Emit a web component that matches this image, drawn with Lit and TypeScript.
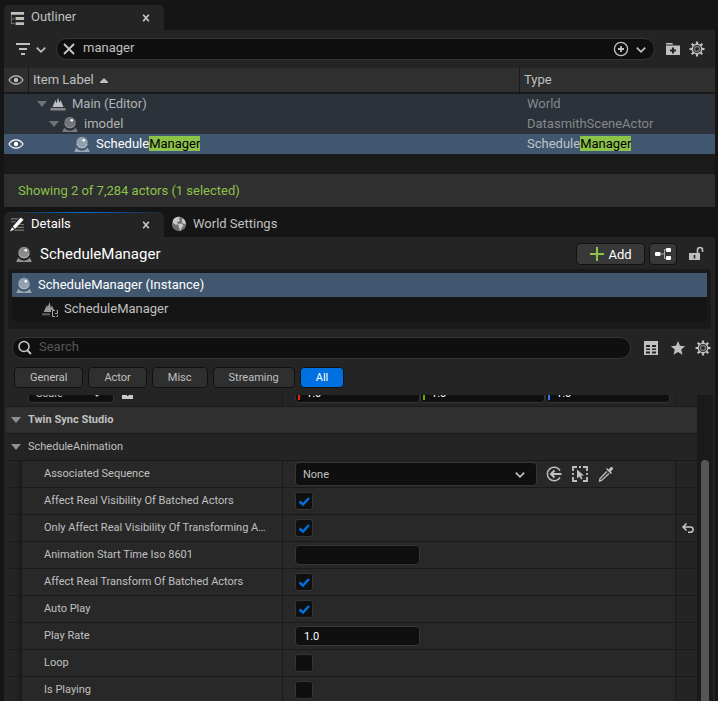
import { LitElement, html, css, svg, nothing } from "lit";
import { customElement, property } from "lit/decorators.js";
import { classMap } from "lit/directives/class-map.js";
import { styleMap } from "lit/directives/style-map.js";

const GEAR_TEETH = [0, 45, 90, 135, 180, 225, 270, 315];

const ICONS = {
  outliner: svg`<path d="M2 2h14v3H2zM7 7.500h9v3H7zM7 13h9v3H7z" fill="#c0c0c0"/><path d="M2.500 5v10M2.500 9.500H6M2.500 14.500H6" stroke="#777" fill="none"/>`,
  close: svg`<path d="M5.500 5l6 7M11.500 5l-6 7" stroke="#c8c8c8" stroke-width="1.800" fill="none"/>`,
  filter: svg`<path d="M1 2h14v2H1zM4 7h8v2H4zM6 12h4v2H6z" fill="#c0c0c0"/>`,
  chevron: svg`<path d="M4 7l4.500 4.500L13 7" stroke="#c0c0c0" stroke-width="1.800" fill="none"/>`,
  clear: svg`<path d="M3 3l10 10M13 3L3 13" stroke="#c8c8c8" stroke-width="1.800" fill="none"/>`,
  plusCircle: svg`<circle cx="8" cy="8" r="6.600" stroke="#c0c0c0" stroke-width="1.300" fill="none"/><path d="M8 5v6M5 8h6" stroke="#c0c0c0" stroke-width="1.800"/>`,
  folderPlus: svg`<path d="M1 2h6l1.500 1.500H1z" fill="#c0c0c0"/><path fill-rule="evenodd" d="M1 4.500h14V14H1zM7 6.500v2H5v2h2v2h2v-2h2v-2H9v-2z" fill="#c0c0c0"/>`,
  gear: svg`<g stroke="#c0c0c0" fill="none">${GEAR_TEETH.map(
    (a) => svg`<path d="M8 0.500v3" stroke-width="2.200" transform="rotate(${a} 8 8)"/>`
  )}<circle cx="8" cy="8" r="4.700" stroke-width="1.400"/><circle cx="8" cy="8" r="2.500" stroke="#777" stroke-width="1.400"/></g>`,
  eye: svg`<path d="M1 8c3.500-5.500 10.500-5.500 14 0c-3.500 5.500-10.500 5.500-14 0z" stroke="currentColor" stroke-width="1.200" fill="none"/><circle cx="8" cy="8" r="2.200" fill="currentColor"/>`,
  world: svg`<path d="M2.500 11L5.500 4l1 3.500L8 1.500l1.500 5.500 1-3 3 7z" fill="#c0c0c0"/><path d="M0.500 14.500V12h15v2.500z" fill="#868a8e"/>`,
  actor: svg`<path d="M2.500 11.500L.500 15v1h15v-1l-2-3.500-1 1.500a7 7 0 0 1-9 0z" fill="currentColor" opacity=".75"/><circle cx="8" cy="6.500" r="5.700" fill="currentColor" opacity=".7"/><path d="M2.800 8a5.400 5.400 0 0 0 10.400 0" stroke="currentColor" fill="none"/><circle cx="9.800" cy="4.300" r="1.300" fill="#fff"/>`,
  details: svg`<path d="M2 2h8M2 5h5M11 8h5M8 11h8M6 14h10" stroke="#777" stroke-width="1.200"/><path d="M12.500 0.500l3 2.500-9 9.500-2.500-2.500zM3.200 10.800l2.500 2.500L1 15.500z" fill="#fff"/>`,
  globe: svg`<circle cx="8" cy="7" r="7.200" fill="#6e6e6e"/><path d="M2 3c2-3 5-3.500 7-3l-1 2 1 2-3 1 1 2-2 1-3-2zM7 7l4-.5 1.500 2.500-2 2-1 3-1.500-3zM11 1l3 2.500.8 4-2-.5-2-2z" fill="#c8c8c8"/>`,
  component: svg`<path d="M2 10L5 4l.8 2L7.500 1l1.500 6 1-2.500L12 9H9v2H2z" fill="#999"/><path d="M0 14.500V12h8v2.500z" fill="#555"/><path d="M13 9.500h-2.500v6H13M15.500 12.500v-3h-1M15.500 14v1.500h-1M15.500 12.500h-2.500" stroke="#aaa" fill="none"/>`,
  plus: svg`<path d="M8 1v14M1 8h14" stroke="#8bc24a" stroke-width="2"/>`,
  graph: svg`<path d="M5 8h4M13 3.500H9.500v9H13" stroke="#aaa" fill="none"/><rect x="0" y="6" width="5.500" height="4" rx="1" fill="#fff"/><rect x="11" y="2" width="5" height="4" rx="1" fill="#fff"/><rect x="11" y="10" width="5" height="4" rx="1" fill="#fff"/>`,
  lock: svg`<path d="M9.500 8V4a2.500 2.500 0 0 1 5 0V6" stroke="#c0c0c0" stroke-width="1.600" fill="none"/><path fill-rule="evenodd" d="M1 7h11V14H1zM5.700 9v3.500h1.600V9z" fill="#c0c0c0"/>`,
  search: svg`<circle cx="7" cy="6.500" r="5" stroke="#c8c8c8" stroke-width="1.500" fill="none"/><path d="M10.500 10.500L14 14" stroke="#c8c8c8" stroke-width="1.800"/>`,
  grid: svg`<path fill-rule="evenodd" d="M1 1h14v14H1zM3 5v2h4V5zM9 5v2h4V5zM3 8.500v1.500h4V8.500zM9 8.500v1.500h4V8.500zM3 11.500v2h4v-2zM9 11.500v2h4v-2z" fill="#c0c0c0"/>`,
  star: svg`<path d="M9 1l2 4.800 5.200.4-4 3.400 1.300 5.200L9 12l-4.500 2.800 1.300-5.200-4-3.400L7 5.800z" fill="#c0c0c0"/>`,
  down: svg`<path d="M0 5h10L5 11z" fill="currentColor"/>`,
  sort: svg`<path d="M0 11h8v-1L4 6 0 10z" fill="#c0c0c0"/>`,
  useAsset: svg`<path d="M14 4.500A6.800 6.800 0 1 0 14 11.500" stroke="#c0c0c0" stroke-width="1.500" fill="none"/><path d="M15.500 8H5M8.500 4.500L5 8l3.500 3.500" stroke="#c0c0c0" stroke-width="2" fill="none"/>`,
  browse: svg`<path d="M1 5V1h4M11 1h4v4M15 11v4h-4M5 15H1v-4M7 1h2M1 7v2M15 7v2" stroke="#c0c0c0" stroke-width="1.800" fill="none"/><path d="M5 3.500l7 6-3 .3 1.500 3-1.500.8-1.600-3L5 12.500z" fill="#c0c0c0"/>`,
  picker: svg`<path d="M9 5.500l-7 7L1.500 15l2-.5 7.500-7" stroke="#c0c0c0" stroke-width="1.300" fill="none"/><path d="M8 3l1-1 1.500 1.500L13 1q2.500-.5 2 2.200L12.700 5.500 14 7l-1 1z" fill="#c0c0c0"/>`,
  reset: svg`<path d="M7.500 3.500L4 7l3.500 3.500M4 7h7.500a2.600 2.600 0 0 1 0 5.200H9" stroke="#c8c8c8" stroke-width="1.500" fill="none"/>`,
  check: svg`<path d="M3.500 8.500L7 11.500 13 5" stroke="#0070e0" stroke-width="2.400" fill="none"/>`,
  lockSmall: svg`<path fill-rule="evenodd" d="M2 3h11v13H2zM7 7v6h1.500V7z" fill="#c8c8c8"/>`,
};

type IconName = keyof typeof ICONS;

@customElement("ui-icon")
class UiIcon extends LitElement {
  @property() name: IconName = "close";

  static styles = css`
    :host {
      display: inline-flex;
      flex: none;
      width: 16px;
      height: 16px;
    }
    .glyph {
      display: block;
      width: 100%;
      height: 100%;
      overflow: visible;
    }
  `;

  render() {
    const wide = this.name === "outliner" || this.name === "details" || this.name === "chevron" || this.name === "close";
    const box = this.name === "down" ? "0 0 10 16" : this.name === "sort" ? "0 0 8 16" : wide ? "0 0 17 17" : "0 0 16 16";
    return html`<svg class="glyph" viewBox=${box} aria-hidden="true">${ICONS[this.name]}</svg>`;
  }
}

interface Item {
  label: string;
  match?: string;
  type: string;
  icon: IconName;
  depth: number;
  selected?: boolean;
}

const ITEMS: Item[] = [
  { label: "Main (Editor)", type: "World", icon: "world", depth: 0 },
  { label: "imodel", type: "DatasmithSceneActor", icon: "actor", depth: 1 },
  { label: "Schedule", match: "Manager", type: "Schedule", icon: "actor", depth: 2, selected: true },
];

interface Prop {
  name: string;
  kind: "asset" | "bool" | "text";
  value?: string;
  on?: boolean;
  changed?: boolean;
}

const PROPS: Prop[] = [
  { name: "Associated Sequence", kind: "asset", value: "None" },
  { name: "Affect Real Visibility Of Batched Actors", kind: "bool", on: true },
  { name: "Only Affect Real Visibility Of Transforming Actors", kind: "bool", on: true, changed: true },
  { name: "Animation Start Time Iso 8601", kind: "text", value: "" },
  { name: "Affect Real Transform Of Batched Actors", kind: "bool", on: true },
  { name: "Auto Play", kind: "bool", on: true },
  { name: "Play Rate", kind: "text", value: "1.0" },
  { name: "Loop", kind: "bool" },
  { name: "Is Playing", kind: "bool" },
];

const FILTERS = ["General", "Actor", "Misc", "Streaming", "All"];

const base = css`
  * {
    box-sizing: border-box;
  }
  button,
  input,
  select {
    font: inherit;
    color: inherit;
    margin: 0;
    padding: 0;
    border: 0;
    background: none;
    min-width: 0;
  }
  input,
  select {
    outline: none;
  }
  .tabs {
    display: flex;
    height: 25px;
  }
  .tab {
    display: flex;
    align-items: center;
    gap: 6px;
    width: 160px;
    padding: 0 10px 0 5px;
    color: #c0c0c0;
  }
  .tab.open {
    background: #242424;
    border-radius: 5px 5px 0 0;
  }
  .tab-name {
    flex: 1;
    text-align: left;
    padding-bottom: 2px;
  }
  .icon-btn {
    display: inline-flex;
  }
  .search {
    display: flex;
    align-items: center;
    flex: 1;
    min-width: 0;
    height: 22px;
    background: #0f0f0f;
    border: 1px solid #353535;
    border-radius: 11px;
  }
  .search-input {
    flex: 1;
    height: 20px;
    padding-bottom: 3px;
  }
`;

@customElement("scene-outliner")
class SceneOutliner extends LitElement {
  static styles = [
    base,
    css`
      :host {
        display: block;
      }
      .panel {
        background: #242424;
      }
      .toolbar {
        display: flex;
        align-items: center;
        height: 38px;
        padding: 0 10px 0 11px;
      }
      .filter {
        display: flex;
        gap: 2px;
        margin-right: 7px;
      }
      .search {
        padding: 0 5px 0 4px;
      }
      .search-input {
        margin-left: 6px;
      }
      .add-filter {
        gap: 4px;
      }
      .tools {
        display: flex;
        gap: 8px;
        margin-left: 10px;
      }
      .items {
        width: 100%;
        table-layout: fixed;
        border-collapse: separate;
        border-spacing: 0;
        line-height: 20px;
      }
      .items th {
        height: 26px;
        padding: 0 4px;
        font-weight: 400;
        text-align: left;
        background: #2f2f2f;
        border-bottom: 2px solid #1a1a1a;
      }
      .items .col-eye {
        width: 25px;
        border-right: 1px solid #1a1a1a;
      }
      .items .col-type {
        width: 196px;
        border-left: 1px solid #1a1a1a;
      }
      .head,
      .label {
        display: flex;
        align-items: center;
        height: 20px;
      }
      .head {
        gap: 6px;
      }
      .sort {
        width: 8px;
      }
      .items td {
        height: 20px;
        padding: 0;
      }
      .row {
        background: #2c323a;
        color: #b0b2b4;
      }
      .row .type {
        padding-left: 8px;
        color: #85888c;
      }
      .row.selected {
        background: #40576f;
        color: #fff;
      }
      .row.selected .type {
        color: #c0c4c8;
      }
      .eye {
        display: block;
        margin-left: 4px;
      }
      .arrow {
        width: 10px;
        margin-right: 3px;
        color: #6f7276;
      }
      .arrow.leaf {
        visibility: hidden;
      }
      .kind {
        margin-right: 6px;
        color: #909294;
      }
      .selected .kind {
        color: #b8c0c8;
      }
      .hit {
        background: #8bc24a;
        color: #000;
        line-height: 15px;
        display: inline-block;
      }
      .rest {
        height: 20px;
        background: #1a1a1a;
      }
      .status {
        height: 33px;
        line-height: 33px;
        padding: 0 14px;
        background: #2f2f2f;
        color: #8bc24a;
      }
    `,
  ];

  render() {
    return html`
      <div class="tabs">
        <div class="tab open">
          <ui-icon name="outliner"></ui-icon><span class="tab-name">Outliner</span>
          <button class="icon-btn" aria-label="Close Outliner"><ui-icon name="close"></ui-icon></button>
        </div>
      </div>
      <div class="panel">
        <div class="toolbar">
          <button class="filter" aria-label="Filter"><ui-icon name="filter"></ui-icon><ui-icon name="chevron"></ui-icon></button>
          <div class="search">
            <button class="icon-btn" aria-label="Clear search"><ui-icon name="clear"></ui-icon></button>
            <input class="search-input" aria-label="Search items" value="manager" />
            <button class="icon-btn add-filter" aria-label="Save search">
              <ui-icon name="plusCircle"></ui-icon><ui-icon name="chevron"></ui-icon>
            </button>
          </div>
          <div class="tools">
            <button class="icon-btn" aria-label="New folder"><ui-icon name="folderPlus"></ui-icon></button>
            <button class="icon-btn" aria-label="Outliner settings"><ui-icon name="gear"></ui-icon></button>
          </div>
        </div>
        <table class="items">
          <thead>
            <tr>
              <th class="col-eye" aria-label="Visibility"><div class="head"><ui-icon name="eye"></ui-icon></div></th>
              <th><div class="head">Item Label <ui-icon class="sort" name="sort"></ui-icon></div></th>
              <th class="col-type"><div class="head">Type</div></th>
            </tr>
          </thead>
          <tbody>
            ${ITEMS.map((item) => {
              const hit = item.match ? html`<span class="hit">${item.match}</span>` : nothing;
              return html`<tr class=${classMap({ row: true, selected: !!item.selected })}>
                <td>${item.selected ? html`<ui-icon class="eye" name="eye"></ui-icon>` : nothing}</td>
                <td>
                  <div class="label" style=${styleMap({ paddingLeft: `${8 + item.depth * 12}px` })}>
                    <ui-icon class=${classMap({ arrow: true, leaf: !!item.selected })} name="down"></ui-icon>
                    <ui-icon class="kind" name=${item.icon}></ui-icon><span>${item.label}${hit}</span>
                  </div>
                </td>
                <td class="type">${item.type}${hit}</td>
              </tr>`;
            })}
          </tbody>
        </table>
        <div class="rest"></div>
        <div class="status">Showing 2 of 7,284 actors (1 selected)</div>
      </div>
    `;
  }
}

@customElement("details-panel")
class DetailsPanel extends LitElement {
  static styles = [
    base,
    css`
      :host {
        display: flex;
        flex-direction: column;
        min-height: 0;
      }
      .tab.active {
        color: #fff;
        background: linear-gradient(90deg, #242424, #0070e0 50%, #242424) top / 100% 1px no-repeat #242424;
      }
      .tab.world {
        margin-left: 2px;
      }
      .panel {
        flex: 1;
        min-height: 0;
        display: flex;
        flex-direction: column;
        background: #242424;
      }
      .title {
        display: flex;
        align-items: center;
        height: 32px;
        padding: 2px 11px 0 12px;
      }
      .heading {
        flex: 1;
        margin: 0 0 0 8px;
        font-size: 15px;
        font-weight: 400;
        color: #fff;
      }
      .actor {
        color: #b8b8b8;
      }
      .push {
        display: flex;
        align-items: center;
        justify-content: center;
        height: 22px;
        background: #383838;
        border: 1px solid #111;
        border-radius: 4px;
        color: #fff;
      }
      .add {
        width: 69px;
        gap: 3px;
      }
      .graph {
        width: 28px;
        margin: 0 11px 0 4px;
      }
      .tree {
        margin: 0 4px;
        padding: 4px 4px 8px;
        background: #1a1a1a;
        border-radius: 4px;
      }
      .node {
        display: flex;
        align-items: center;
        gap: 6px;
        height: 24px;
        padding: 0 4px;
        background: #151515;
        color: #c0c0c0;
      }
      .node.selected {
        background: #40576f;
        color: #fff;
      }
      .node .actor {
        color: #b8c0c8;
      }
      .node.child {
        padding-left: 30px;
      }
      .text {
        padding-bottom: 2px;
      }
      .find {
        display: flex;
        align-items: center;
        margin-top: 8px;
        padding: 0 4px 0 8px;
      }
      .find .search {
        padding-left: 4px;
      }
      .find .search-input {
        margin-left: 6px;
      }
      .search-input::placeholder {
        color: #575757;
        opacity: 1;
      }
      .tools {
        display: flex;
        gap: 10px;
        margin-left: 12px;
      }
      .filters {
        display: flex;
        gap: 5px;
        padding: 8px 10px 7px;
        font-size: 11px;
      }
      .chip {
        height: 21px;
        padding: 0 15px;
        background: #2f2f2f;
        border: 1px solid #111;
        border-radius: 4px;
        color: #c0c0c0;
      }
      .chip.on {
        background: #0070e0;
        color: #fff;
      }
      .scroller {
        flex: 1;
        min-height: 0;
        display: flex;
        margin: 0 2px;
        overflow: hidden;
        font-size: 11px;
      }
      .list {
        flex: 1;
        min-width: 0;
      }
      .track {
        width: 16px;
        padding: 65px 4px 0;
        background: #1a1a1a;
      }
      .thumb {
        height: 100%;
        background: #575757;
        border-radius: 4px 4px 0 0;
      }
      .prop {
        display: grid;
        grid-template-columns: 16px 260fr 394fr 21px;
        height: 27px;
        border-bottom: 1px solid #1a1a1a;
        background: #282828;
      }
      .gutter {
        background: linear-gradient(90deg, #242424 60%, #1a1a1a);
      }
      .prop.cut {
        height: 12px;
        align-items: end;
        overflow: hidden;
        background: #242424;
        grid-template-columns: 22px 254fr 394fr 21px;
        grid-template-rows: 11px;
      }
      .name {
        padding: 0 16px 0 22px;
        line-height: 25px;
        color: #c0c0c0;
        white-space: nowrap;
        overflow: hidden;
        text-overflow: ellipsis;
      }
      .value {
        display: flex;
        align-items: center;
        padding-left: 12px;
        border-left: 1px solid #1a1a1a;
        border-right: 1px solid #1a1a1a;
      }
      .revert {
        display: flex;
        align-items: center;
        justify-content: center;
        background: #242424;
      }
      .cut-name,
      .cut .value {
        display: flex;
        align-items: end;
        height: 27px;
        padding-bottom: 3px;
      }
      .cut-name {
        gap: 6px;
      }
      .cut-lock {
        align-self: center;
      }
      .field {
        width: 125px;
        height: 20px;
        padding: 0 8px;
        background: #0f0f0f;
        border: 1px solid #353535;
        border-radius: 4px;
        color: #fff;
      }
      .axis {
        display: flex;
        align-items: center;
        gap: 6px;
        width: 125px;
        height: 20px;
        padding: 0 2px;
        background: #0f0f0f;
        border: 1px solid #353535;
        border-radius: 4px;
        color: #fff;
      }
      .axis::before {
        content: "";
        width: 2px;
        height: 14px;
        background: currentColor;
      }
      .axis.x::before {
        background: #e02a00;
      }
      .axis.y::before {
        background: #6ca800;
      }
      .axis.z::before {
        background: #2c7be8;
      }
      .axis-input {
        width: 100px;
      }
      .stack {
        display: grid;
        align-items: center;
      }
      .stack > * {
        grid-area: 1 / 1;
      }
      .mark {
        pointer-events: none;
        justify-self: center;
      }
      .mark.drop {
        justify-self: end;
        margin-right: 9px;
      }
      .box {
        appearance: none;
        width: 18px;
        height: 18px;
        background: #0f0f0f;
        border: 1px solid #353535;
        border-radius: 3px;
      }
      .combo {
        appearance: none;
        width: 242px;
        height: 24px;
        padding: 0 7px;
        background: #0f0f0f;
        border: 1px solid #353535;
        border-radius: 4px;
        color: #c0c0c0;
      }
      .combo.scale {
        width: 86px;
        height: 20px;
      }
      .asset-tools {
        display: flex;
        gap: 10px;
        margin-left: 9px;
      }
      .section {
        display: flex;
        align-items: center;
        gap: 7px;
        width: 100%;
        height: 27px;
        padding: 0 5px;
        border-bottom: 1px solid #1a1a1a;
        color: #c0c0c0;
      }
      .section.category {
        background: #2f2f2f;
        font-weight: 700;
      }
      .arrow {
        width: 10px;
        color: #909090;
      }
    `,
  ];

  private editor(p: Prop, id: string) {
    if (p.kind === "bool") {
      return html`<span class="stack">
        <input class="box" type="checkbox" id=${id} ?checked=${!!p.on} />
        ${p.on ? html`<ui-icon class="mark" name="check"></ui-icon>` : nothing}
      </span>`;
    }
    if (p.kind === "text") {
      return html`<input class="field" id=${id} value=${p.value ?? ""} />`;
    }
    return html`<span class="stack">
        <select class="combo" id=${id}>
          <option>${p.value}</option>
        </select>
        <ui-icon class="mark drop" name="chevron"></ui-icon>
      </span>
      <span class="asset-tools">
        <button class="icon-btn" aria-label="Use selected asset"><ui-icon name="useAsset"></ui-icon></button>
        <button class="icon-btn" aria-label="Browse to asset"><ui-icon name="browse"></ui-icon></button>
        <button class="icon-btn" aria-label="Pick from scene"><ui-icon name="picker"></ui-icon></button>
      </span>`;
  }

  render() {
    return html`
      <div class="tabs">
        <div class="tab open active">
          <ui-icon name="details"></ui-icon><span class="tab-name">Details</span>
          <button class="icon-btn" aria-label="Close Details"><ui-icon name="close"></ui-icon></button>
        </div>
        <button class="tab world"><ui-icon name="globe"></ui-icon><span class="tab-name">World Settings</span></button>
      </div>
      <div class="panel">
        <div class="title">
          <ui-icon class="actor" name="actor"></ui-icon>
          <h1 class="heading">ScheduleManager</h1>
          <button class="push add"><ui-icon name="plus"></ui-icon>Add</button>
          <button class="push graph" aria-label="Edit blueprint"><ui-icon name="graph"></ui-icon></button>
          <button class="icon-btn" aria-label="Lock selection"><ui-icon name="lock"></ui-icon></button>
        </div>
        <div class="tree">
          <div class="node selected">
            <ui-icon class="actor" name="actor"></ui-icon><span class="text">ScheduleManager (Instance)</span>
          </div>
          <div class="node child"><ui-icon name="component"></ui-icon><span class="text">ScheduleManager</span></div>
        </div>
        <div class="find">
          <div class="search">
            <ui-icon name="search"></ui-icon>
            <input class="search-input" aria-label="Search details" placeholder="Search" />
          </div>
          <div class="tools">
            <button class="icon-btn" aria-label="Property matrix"><ui-icon name="grid"></ui-icon></button>
            <button class="icon-btn" aria-label="Favorites"><ui-icon name="star"></ui-icon></button>
            <button class="icon-btn" aria-label="Details settings"><ui-icon name="gear"></ui-icon></button>
          </div>
        </div>
        <div class="filters">
          ${FILTERS.map((f) => html`<button class=${classMap({ chip: true, on: f === "All" })}>${f}</button>`)}
        </div>
        <div class="scroller">
          <div class="list">
            <div class="prop cut">
              <span></span>
              <div class="cut-name">
                <span class="stack">
                  <select class="combo scale" aria-label="Scale mode">
                    <option>Scale</option>
                  </select>
                  <ui-icon class="mark drop" name="chevron"></ui-icon>
                </span>
                <ui-icon class="cut-lock" name="lockSmall"></ui-icon>
              </div>
              <div class="value">
                ${["x", "y", "z"].map(
                  (a) => html`<label class="axis ${a}"><input class="axis-input" aria-label="Scale ${a}" value="1.0" /></label>`
                )}
              </div>
              <span></span>
            </div>
            <button class="section category">
              <ui-icon class="arrow" name="down"></ui-icon><span class="text">Twin Sync Studio</span>
            </button>
            <button class="section">
              <ui-icon class="arrow" name="down"></ui-icon><span class="text">ScheduleAnimation</span>
            </button>
            ${PROPS.map(
              (p, i) => html`<div class="prop">
                <span class="gutter"></span>
                <label class="name" for="prop-${i}">${p.name}</label>
                <div class="value">${this.editor(p, `prop-${i}`)}</div>
                <div class="revert">
                  ${p.changed
                    ? html`<button class="icon-btn" aria-label="Reset to default"><ui-icon name="reset"></ui-icon></button>`
                    : nothing}
                </div>
              </div>`
            )}
          </div>
          <div class="track"><div class="thumb"></div></div>
        </div>
      </div>
    `;
  }
}

@customElement("app-root")
class AppRoot extends LitElement {
  static styles = css`
    :host {
      display: flex;
      flex-direction: column;
      gap: 5px;
      box-sizing: border-box;
      height: 100vh;
      padding: 5px 3px 0 4px;
      overflow: hidden;
      background: #151515;
      color: #c0c0c0;
      font: 13px Roboto, "Liberation Sans", sans-serif;
    }
    .details {
      flex: 1;
    }
  `;

  render() {
    return html`<scene-outliner></scene-outliner><details-panel class="details"></details-panel>`;
  }
}
